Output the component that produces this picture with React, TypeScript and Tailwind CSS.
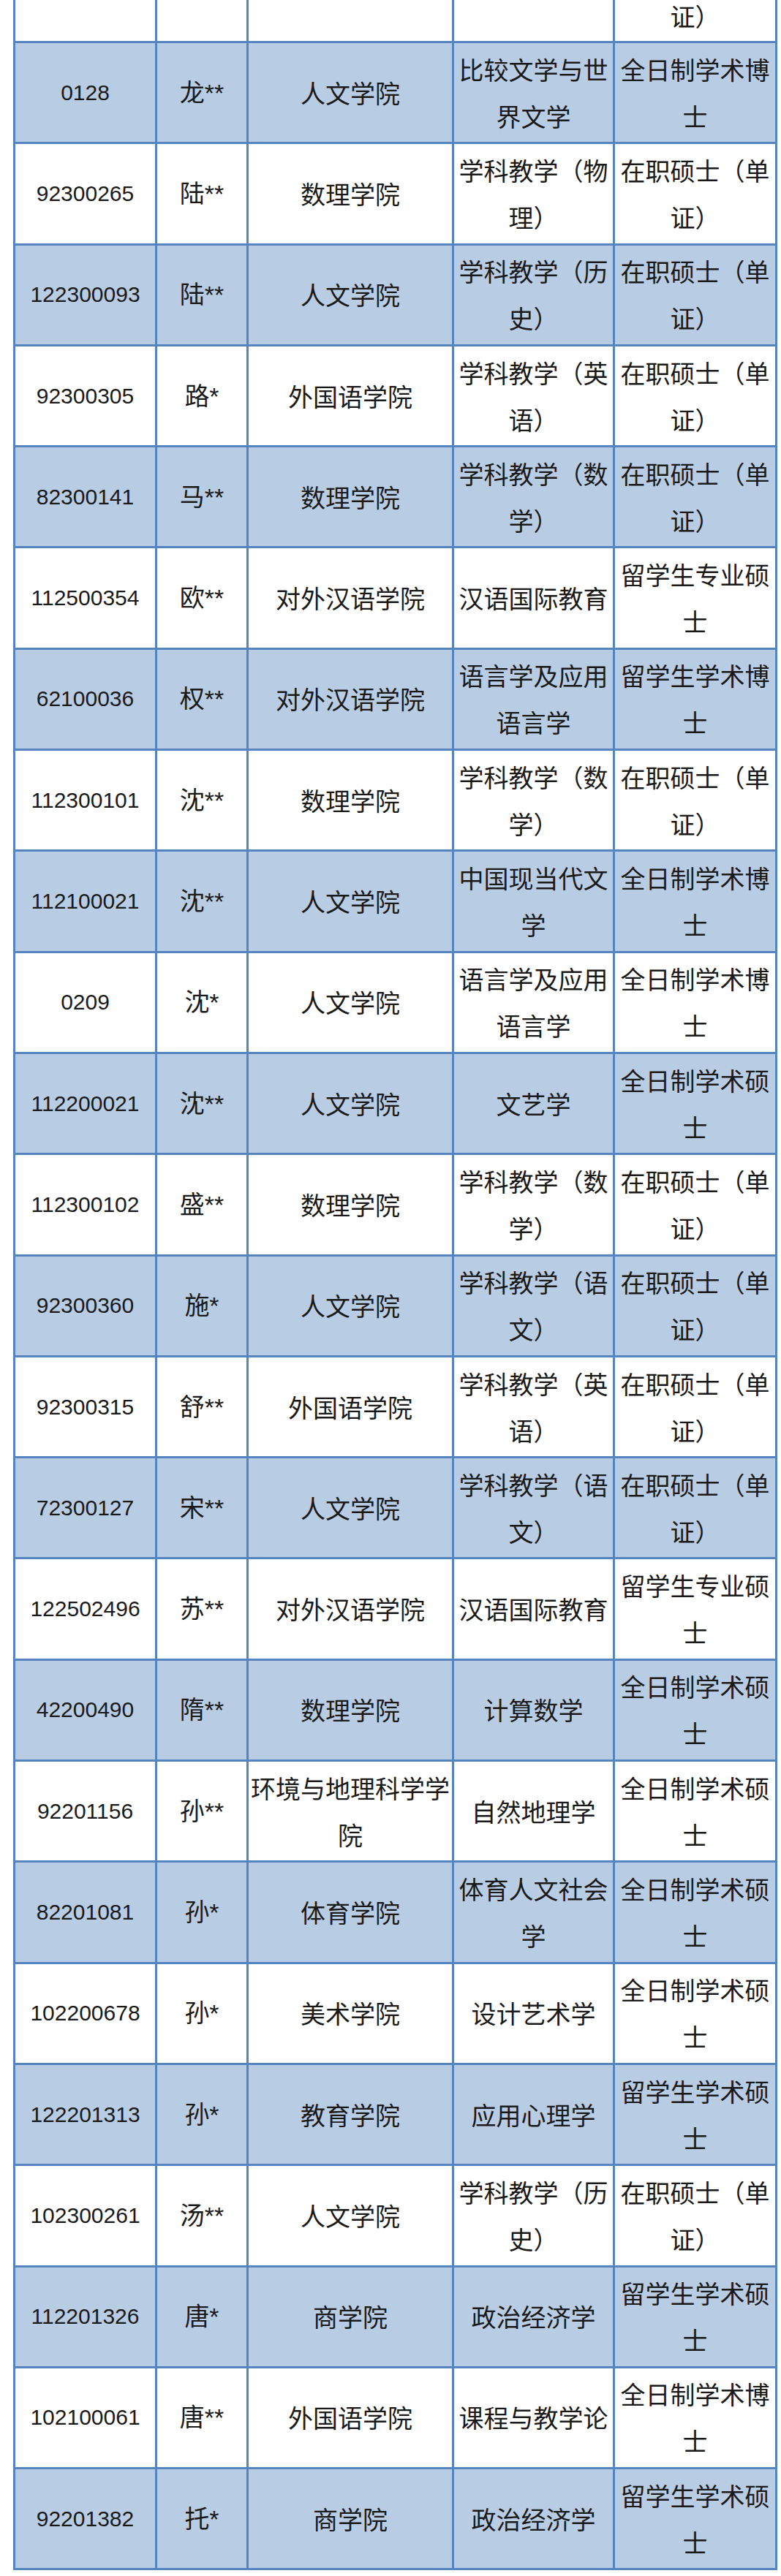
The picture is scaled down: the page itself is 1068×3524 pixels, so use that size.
import React from "react";

type Row = [string, string, string, string, string];

const rows: Row[] = [
  ["0128", "龙**", "人文学院", "比较文学与世界文学", "全日制学术博士"],
  ["92300265", "陆**", "数理学院", "学科教学（物理）", "在职硕士（单证）"],
  ["122300093", "陆**", "人文学院", "学科教学（历史）", "在职硕士（单证）"],
  ["92300305", "路*", "外国语学院", "学科教学（英语）", "在职硕士（单证）"],
  ["82300141", "马**", "数理学院", "学科教学（数学）", "在职硕士（单证）"],
  ["112500354", "欧**", "对外汉语学院", "汉语国际教育", "留学生专业硕士"],
  ["62100036", "权**", "对外汉语学院", "语言学及应用语言学", "留学生学术博士"],
  ["112300101", "沈**", "数理学院", "学科教学（数学）", "在职硕士（单证）"],
  ["112100021", "沈**", "人文学院", "中国现当代文学", "全日制学术博士"],
  ["0209", "沈*", "人文学院", "语言学及应用语言学", "全日制学术博士"],
  ["112200021", "沈**", "人文学院", "文艺学", "全日制学术硕士"],
  ["112300102", "盛**", "数理学院", "学科教学（数学）", "在职硕士（单证）"],
  ["92300360", "施*", "人文学院", "学科教学（语文）", "在职硕士（单证）"],
  ["92300315", "舒**", "外国语学院", "学科教学（英语）", "在职硕士（单证）"],
  ["72300127", "宋**", "人文学院", "学科教学（语文）", "在职硕士（单证）"],
  ["122502496", "苏**", "对外汉语学院", "汉语国际教育", "留学生专业硕士"],
  ["42200490", "隋**", "数理学院", "计算数学", "全日制学术硕士"],
  ["92201156", "孙**", "环境与地理科学学院", "自然地理学", "全日制学术硕士"],
  ["82201081", "孙*", "体育学院", "体育人文社会学", "全日制学术硕士"],
  ["102200678", "孙*", "美术学院", "设计艺术学", "全日制学术硕士"],
  ["122201313", "孙*", "教育学院", "应用心理学", "留学生学术硕士"],
  ["102300261", "汤**", "人文学院", "学科教学（历史）", "在职硕士（单证）"],
  ["112201326", "唐*", "商学院", "政治经济学", "留学生学术硕士"],
  ["102100061", "唐**", "外国语学院", "课程与教学论", "全日制学术博士"],
  ["92201382", "托*", "商学院", "政治经济学", "留学生学术硕士"],
];

const base =
  "flex items-center justify-center text-center text-[#1a1a1a] leading-[64px]";
const idFont = "font-['Liberation_Sans',sans-serif] text-[30px]";
const nameFont =
  "font-['Liberation_Sans','Noto_Sans_CJK_SC',sans-serif] text-[34px]";
const cjkFont = "font-['Noto_Sans_CJK_SC',sans-serif] text-[34px]";

export default function App() {
  return (
    <div className="min-h-[3524px] bg-white">
      <div className="ml-[18px] w-[1045px] bg-[#5585c1] px-[3px] pb-[3px] grid grid-cols-[191px_122px_278px_217px_219px] grid-rows-[56px] auto-rows-[135.3px] gap-[3px]">
        {/* partially scrolled-off row */}
        <div className="bg-white" />
        <div className="bg-white" />
        <div className="bg-white" />
        <div className="bg-white" />
        <div
          className={`bg-white flex items-end justify-center text-center text-[#1a1a1a] leading-[64px] pb-[2px] ${cjkFont}`}
        >
          证）
        </div>
        {rows.map((r, i) => {
          const bg = i % 2 === 0 ? "bg-[#b8cce4]" : "bg-white";
          return (
            <React.Fragment key={i}>
              <div className={`${bg} ${base} ${idFont}`}>{r[0]}</div>
              <div className={`${bg} ${base} ${nameFont}`}>{r[1]}</div>
              <div className={`${bg} ${base} ${cjkFont}`}>{r[2]}</div>
              <div className={`${bg} ${base} ${cjkFont}`}>{r[3]}</div>
              <div className={`${bg} ${base} ${cjkFont}`}>{r[4]}</div>
            </React.Fragment>
          );
        })}
      </div>
    </div>
  );
}
